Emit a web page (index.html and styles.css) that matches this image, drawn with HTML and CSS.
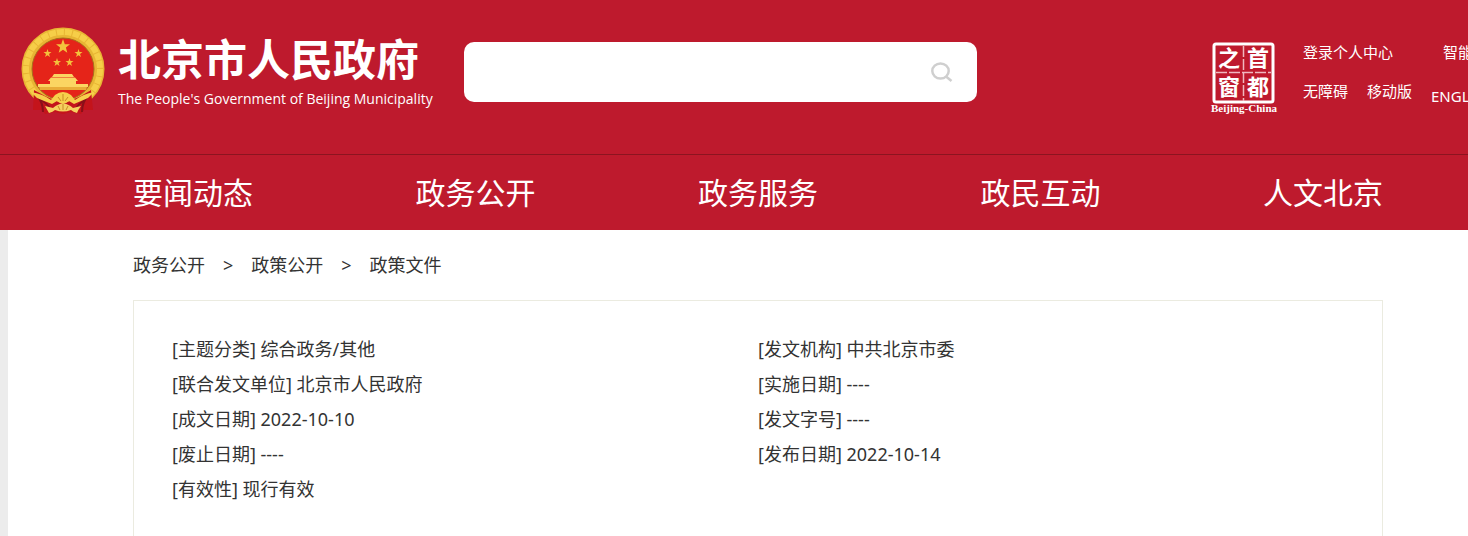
FILE: index.html
```
<!DOCTYPE html>
<html lang="zh-CN">
<head>
  <meta charset="UTF-8">
  <meta name="viewport" content="width=device-width, initial-scale=1.0">
  <title>政策文件_北京市人民政府</title>
  <link rel="stylesheet" href="styles.css">
</head>
<body>

  <header class="header">
    <div class="header-top">
      <a class="logo" href="#">
        <svg class="emblem" viewBox="0 0 84 90" aria-hidden="true">
          <circle cx="42" cy="43" r="36" fill="#e52419" stroke="#e8b534" stroke-width="11"/>
          <circle cx="42" cy="43" r="37" fill="none" stroke="#f6ce48" stroke-width="6" stroke-dasharray="7 1"/>
          <circle cx="42" cy="43" r="31" fill="#e52419" stroke="#a8701c" stroke-width="1"/>
          <path d="M13 64L24 70L42 78L60 70L70 64L72 84L63 84L60 88L50 86L42 88L34 86L24 88L21 84L12 84Z" fill="#c4141b"/>
          <path d="M16 70Q22 76 22 86M67 70Q61 76 61 86M20 74Q27 78 29 83M64 74Q57 78 55 83" fill="none" stroke="#8a1019" stroke-width="2"/>
          <g fill="#f3c23c">
            <path d="M42 13L43.800 18.200L49 18.300L44.900 21.600L46.300 26.800L42 23.800L37.700 26.800L39.100 21.600L35 18.300L40.200 18.200Z"/>
            <path d="M26.500 23L27.500 26L30.500 26L28 28L29 31L26.500 29.200L24 31L25 28L22.500 26L25.500 26Z"/>
            <path d="M57.500 23L58.500 26L61.500 26L59 28L60 31L57.500 29.200L55 31L56 28L53.500 26L56.500 26Z"/>
            <path d="M36 32L37 35L40 35L37.500 37L38.500 40L36 38.200L33.500 40L34.500 37L32 35L35 35Z"/>
            <path d="M48.500 32L49.500 35L52.500 35L50 37L51 40L48.500 38.200L46 40L47 37L44.500 35L47.500 35Z"/>
          </g>
          <path d="M33 48H51L53 51H31ZM30 51.500H54L57 55H27ZM29 55H55V58H67V61H17V58H29Z" fill="#fbd562"/>
          <path d="M18 61H66L65 64H19Z" fill="#e9ac38"/>
          <path d="M10 66Q22 68 30 74L34 69Q42 63 50 69L54 74Q62 68 73 66L67 72Q60 75 53 78L48 75Q42 80 36 75L31 78Q23 75 16 72Z" fill="#f6cf4c"/>
          <path d="M37 71L40 75M42 68V75M47 71L44 75" stroke="#c98b24" stroke-width="1"/>
          <path d="M24 80L32 82Q42 73 52 82L60 80Q57 84 56 87Q52 86 50 84Q42 87 34 84Q32 86 28 87Z" fill="#f5d060"/>
          <path d="M37 80L39 84M42 78V84M47 80L45 84" stroke="#c98b24" stroke-width="1"/>
        </svg>
        <span class="logo-text">
          <span class="logo-cn">北京市人民政府</span>
          <span class="logo-en">The People's Government of Beijing Municipality</span>
        </span>
      </a>

      <form class="search" role="search">
        <input class="search-input" type="text" aria-label="搜索">
        <button class="search-btn" type="submit" aria-label="搜索">
          <svg viewBox="0 0 22 20" width="22" height="20" fill="none" stroke="#cfcfcf" stroke-width="2.500">
            <ellipse cx="9.500" cy="9" rx="8.200" ry="7.500"/>
            <path d="M15 14.500L20.500 19"/>
          </svg>
        </button>
      </form>

      <div class="header-side">
        <a class="seal" href="#" aria-label="首都之窗">
          <svg viewBox="0 0 70 74" width="70" height="74">
            <rect x="5" y="3" width="59" height="58" rx="2" fill="none" stroke="#fff" stroke-width="3"/>
            <path d="M34.500 5V60M7 31.500H62" stroke="#f0b8bf" stroke-width="1.500" stroke-dasharray="11 2"/>
            <g class="seal-char">
              <text x="20" y="25">之</text>
              <text x="49" y="25">首</text>
              <text x="20" y="54">窗</text>
              <text x="49" y="54">都</text>
            </g>
            <text class="seal-en" x="35" y="71">Beijing-China</text>
          </svg>
        </a>
        <div class="links">
          <div class="links-row links-wide">
            <a href="#">登录个人中心</a>
            <a href="#">智能问答</a>
          </div>
          <div class="links-row">
            <a href="#">无障碍</a>
            <a href="#">移动版</a>
            <a class="lang" href="#">ENGLISH</a>
          </div>
        </div>
      </div>
    </div>

    <nav class="nav">
      <div class="container nav-list">
        <a href="#">要闻动态</a>
        <a href="#">政务公开</a>
        <a href="#">政务服务</a>
        <a href="#">政民互动</a>
        <a href="#">人文北京</a>
      </div>
    </nav>
  </header>

  <main class="main">
    <div class="container">
      <div class="crumbs">
        <a href="#">政务公开</a>
        <span>&gt;</span>
        <a href="#">政策公开</a>
        <span>&gt;</span>
        <a href="#">政策文件</a>
      </div>

      <ul class="info">
        <li>[主题分类] 综合政务/其他</li>
        <li>[发文机构] 中共北京市委</li>
        <li>[联合发文单位] 北京市人民政府</li>
        <li>[实施日期] ----</li>
        <li>[成文日期] 2022-10-10</li>
        <li>[发文字号] ----</li>
        <li>[废止日期] ----</li>
        <li>[发布日期] 2022-10-14</li>
        <li>[有效性] 现行有效</li>
      </ul>
    </div>
  </main>

</body>
</html>
```

FILE: styles.css
```
* {
  box-sizing: border-box;
}
html {
  overflow: hidden;
}
body {
  margin: 0;
  min-width: 1516px;
  background-color: #ececec;
  color: #333;
  font-family: "Noto Sans", "Noto Sans CJK SC", sans-serif;
  font-size: 18px;
}
a {
  color: inherit;
  text-decoration: none;
}
.container {
  max-width: 1250px;
  margin: 0 auto;
}

/* header */
.header {
  background-color: #be1a2d;
  color: #fff;
}
.header-top {
  display: flex;
  align-items: flex-start;
  padding: 26px 12px 0 21px;
  height: 154px;
}
.logo {
  display: flex;
  flex: 0 0 403px;
  min-width: 0;
  gap: 13px;
}
.emblem {
  flex: none;
  width: 84px;
  height: 90px;
}
.logo-text {
  display: flex;
  flex-direction: column;
  padding-top: 9px;
  white-space: nowrap;
}
.logo-cn {
  font-size: 43px;
  font-weight: bold;
  line-height: 50px;
}
.logo-en {
  font-family: "Open Sans", sans-serif;
  font-size: 14px;
  line-height: 28px;
}
.search {
  display: flex;
  width: 513px;
  height: 60px;
  margin: 16px 0 0 40px;
  background-color: #fff;
  border-radius: 10px;
}
.search-input {
  flex: 1;
  min-width: 0;
  padding: 0 20px;
  border: none;
  outline: none;
  background: none;
  font-size: 18px;
}
.search-btn {
  display: flex;
  align-items: center;
  justify-content: center;
  width: 70px;
  padding: 0;
  border: none;
  background: none;
  cursor: pointer;
}
.header-side {
  display: flex;
  gap: 24px;
  margin-left: auto;
  padding-top: 14px;
}
.seal {
  padding-top: 1px;
}
.seal-char {
  fill: #fff;
  font-family: "Noto Sans CJK SC", sans-serif;
  font-size: 22px;
  font-weight: bold;
  text-anchor: middle;
}
.seal-en {
  fill: #fff;
  font-family: "Liberation Serif", serif;
  font-size: 11px;
  font-weight: bold;
  text-anchor: middle;
}
.links {
  width: 201px;
  font-size: 15px;
  line-height: 24px;
  white-space: nowrap;
}
.links-row {
  display: flex;
  gap: 19px;
  margin-bottom: 15px;
}
.links-wide {
  gap: 50px;
}
.lang {
  padding-top: 5px;
}

/* nav */
.nav {
  border-top: 1px solid #8c1420;
}
.nav-list {
  display: flex;
  justify-content: space-between;
  font-size: 30px;
  line-height: 75px;
}

/* content */
.main {
  margin: 0 8px;
  background-color: #fff;
}
.crumbs {
  display: flex;
  gap: 18px;
  line-height: 70px;
}
.info {
  display: grid;
  grid-template-columns: 1fr 1fr;
  margin: 0;
  padding: 31px 38px 40px;
  border: 1px solid #ebebe0;
  line-height: 35px;
  list-style: none;
}
```
